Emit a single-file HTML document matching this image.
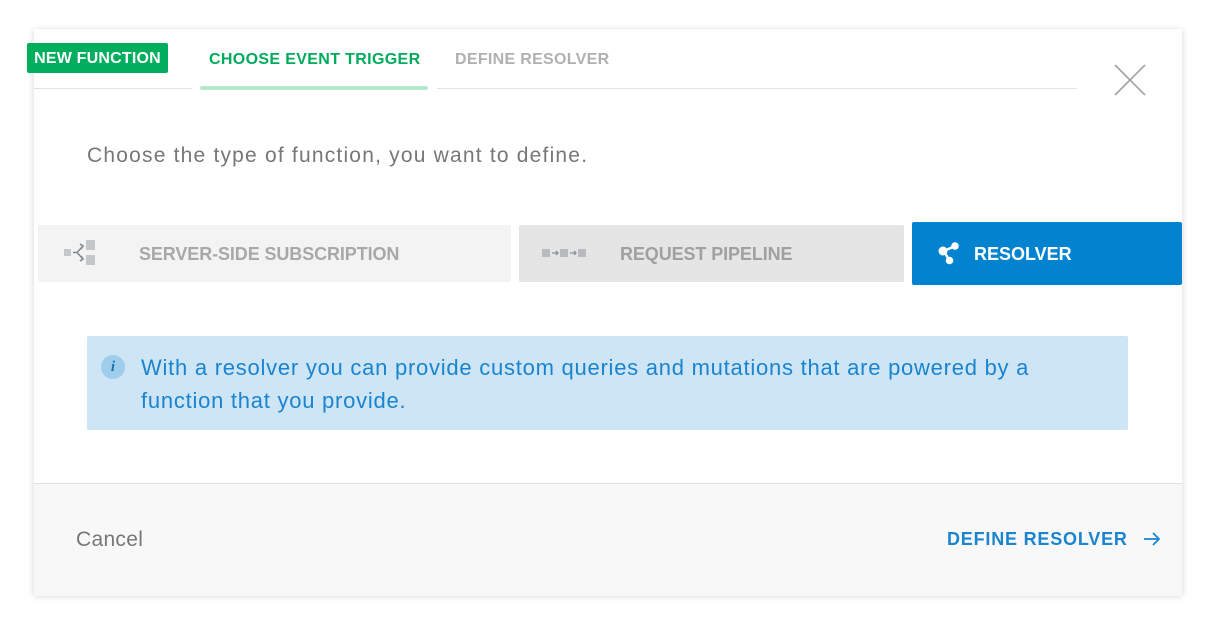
<!DOCTYPE html>
<html><head><style>
body{margin:0;width:1205px;height:624px;background:#fff;font-family:"Liberation Sans",sans-serif;position:relative;overflow:hidden}
.modal{position:absolute;left:34px;top:29px;width:1148px;height:566px;background:#fff;box-shadow:0 1px 6px rgba(0,0,0,.18)}
.a{position:absolute;white-space:nowrap}
</style></head><body>
<div class="modal">
  <div class="a" style="left:0;top:59px;width:158px;height:1px;background:#e2e2e2"></div>
  <div class="a" style="left:166px;top:57px;width:228px;height:4px;border-radius:2px;background:#b5e8cf"></div>
  <div class="a" style="left:403px;top:59px;width:640px;height:1px;background:#e2e2e2"></div>
  <div class="a" style="left:1080px;top:35px;width:32px;height:32px">
    <svg width="32" height="32"><path d="M1 1L31 31M31 1L1 31" stroke="#a0a0a0" stroke-width="1.6"/></svg>
  </div>
  <div class="a" style="left:53px;top:115px;font-size:21px;color:#777;letter-spacing:1.2px">Choose the type of function, you want to define.</div>

  <div class="a" style="left:4px;top:196px;width:473px;height:57px;background:#f3f3f3;border-radius:2px"></div>
  <svg class="a" style="left:30px;top:211px" width="50" height="28"><rect x="0" y="9" width="7" height="7" fill="#c4c6c8"/><path d="M9 12.5H13L19 6M13 12.5L19 19M16 4L19 6L17 9M16 21L19 19L17 16" stroke="#7f8a92" stroke-width="1.6" fill="none"/><rect x="22" y="0" width="9" height="10" fill="#c4c6c8"/><rect x="22" y="15" width="9" height="10" fill="#c4c6c8"/></svg>
  <div class="a" style="left:105px;top:215px;font-size:18px;font-weight:bold;color:#a8a8a8;letter-spacing:-0.1px">SERVER-SIDE SUBSCRIPTION</div>

  <div class="a" style="left:485px;top:196px;width:385px;height:57px;background:#e5e5e5;border-radius:2px"></div>
  <svg class="a" style="left:508px;top:219px" width="56" height="12"><rect x="0" y="1" width="8" height="8" fill="#b7bbbd"/><path d="M10 5H16M14 3L16 5L14 7" stroke="#8a9299" stroke-width="1.3" fill="none"/><rect x="18" y="1" width="8" height="8" fill="#b7bbbd"/><path d="M28 5H34M32 3L34 5L32 7" stroke="#8a9299" stroke-width="1.3" fill="none"/><rect x="36" y="1" width="8" height="8" fill="#b7bbbd"/></svg>
  <div class="a" style="left:586px;top:215px;font-size:18px;font-weight:bold;color:#a0a0a0;letter-spacing:-0.1px">REQUEST PIPELINE</div>

  <div class="a" style="left:878px;top:193px;width:270px;height:63px;background:#0183d0;border-radius:2px"></div>
  <svg class="a" style="left:902px;top:211px" width="26" height="26"><path d="M8 11L19 6M8 11L13 20" stroke="#fff" stroke-width="2.4"/><circle cx="7" cy="11" r="4.5" fill="#fff"/><circle cx="19" cy="6" r="3.8" fill="#fff"/><circle cx="13.5" cy="20.5" r="3.8" fill="#fff"/></svg>
  <div class="a" style="left:940px;top:215px;font-size:18px;font-weight:bold;color:#fff;letter-spacing:0px">RESOLVER</div>

  <div class="a" style="left:53px;top:307px;width:1041px;height:94px;background:#cde5f4;border-radius:2px"></div>
  <div class="a" style="left:67px;top:326px;width:24px;height:24px;border-radius:50%;background:#9fcdec;color:#1b73b0;font:italic bold 15px 'Liberation Serif',serif;text-align:center;line-height:24px">i</div>
  <div class="a" style="left:107px;top:322px;font-size:22px;line-height:33px;color:#1a84d0;letter-spacing:0.75px">With a resolver you can provide custom queries and mutations that are powered by a<br>function that you provide.</div>

  <div class="a" style="left:0;top:454px;width:1148px;height:112px;background:#f8f8f8;border-top:1px solid #e0e0e0"></div>
  <div class="a" style="left:42px;top:499px;font-size:21px;color:#777;letter-spacing:0.3px">Cancel</div>
  <div class="a" style="left:913px;top:500px;font-size:18px;font-weight:bold;color:#1a84d0;letter-spacing:0.8px">DEFINE RESOLVER</div>
  <svg class="a" style="left:1109px;top:502px" width="18" height="16"><path d="M1 8H16M10 2L16 8L10 14" stroke="#1a84d0" stroke-width="1.8" fill="none"/></svg>
</div>
<div class="a" style="left:27px;top:43px;width:141px;height:30px;background:#00ae5e;border-radius:2px;color:#fff;font-size:16px;font-weight:bold;line-height:32px;text-align:center;letter-spacing:0.2px">NEW FUNCTION</div>
<div class="a" style="left:209px;top:51px;font-size:16px;font-weight:bold;color:#00ab5c;letter-spacing:0.35px">CHOOSE EVENT TRIGGER</div>
<div class="a" style="left:455px;top:51px;font-size:16px;font-weight:bold;color:#b0b0b0;letter-spacing:0.3px">DEFINE RESOLVER</div>
</body></html>
